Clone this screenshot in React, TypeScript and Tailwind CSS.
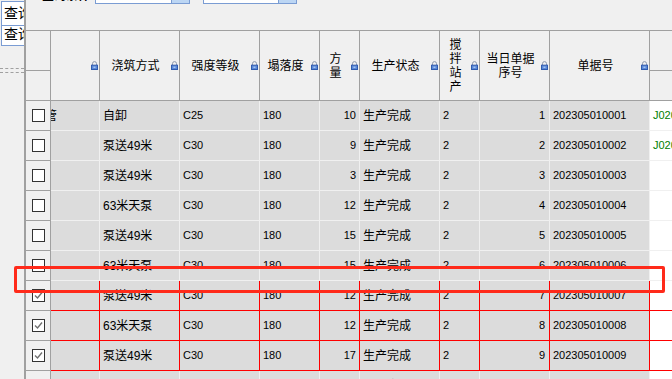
import React from "react";

const COLS =
  "grid grid-cols-[25px_49px_80px_80px_60px_40px_80px_40px_70px_100px_22px]";

function Lock() {
  return (
    <svg width="7" height="9" viewBox="0 0 7 9" className="shrink-0 mr-[1px]">
      <path d="M1.5 4.2V2.6a2 2 0 0 1 4 0v1.6" stroke="#8c98ad" strokeWidth="1" fill="none" />
      <rect x="0.5" y="4.2" width="6" height="4.3" fill="#5b8ad8" stroke="#2f5bb0" strokeWidth="1" />
      <rect x="2.5" y="5.6" width="2" height="1.4" fill="#a9c6f2" />
    </svg>
  );
}

function H({ children }: { children: React.ReactNode }) {
  return (
    <div className="flex items-center border-r border-[#a0a0a0] h-full">
      <div className="flex-1 text-center leading-[14px] text-[12px] text-black">{children}</div>
      <Lock />
    </div>
  );
}

function Check({ checked }: { checked: boolean }) {
  return (
    <div className="w-[13px] h-[13px] border border-[#333] bg-white flex items-center justify-center">
      {checked && (
        <svg width="11" height="11" viewBox="0 0 11 11">
          <polyline points="2,5.5 4.5,8 9,2.5" fill="none" stroke="#707070" strokeWidth="1.4" />
        </svg>
      )}
    </div>
  );
}

type Row = { a: string; g: string; q: string; n: number; c?: boolean; j?: boolean; lead?: string };

const rows: Row[] = [
  { a: "自卸", g: "C25", q: "10", n: 1, j: true, lead: "管" },
  { a: "泵送49米", g: "C30", q: "9", n: 2, j: true },
  { a: "泵送49米", g: "C30", q: "3", n: 3 },
  { a: "63米天泵", g: "C30", q: "12", n: 4 },
  { a: "泵送49米", g: "C30", q: "15", n: 5 },
  { a: "63米天泵", g: "C30", q: "15", n: 6 },
  { a: "泵送49米", g: "C30", q: "12", n: 7, c: true },
  { a: "63米天泵", g: "C30", q: "12", n: 8, c: true },
  { a: "泵送49米", g: "C30", q: "17", n: 9, c: true },
  { a: "63米天泵", g: "C30", q: "11", n: 10 },
];

function DataRow({ r }: { r: Row }) {
  const b = r.c ? "border-[#ff0000]" : "border-[#f0f0f0]";
  const cell = `h-[30px] border-r border-b ${b} bg-[#dcdcdc] flex items-center overflow-hidden whitespace-nowrap`;
  const bill = "2023050100" + String(r.n).padStart(2, "0");
  return (
    <div className={COLS}>
      <div className="h-[30px] border-r border-b border-[#a0a0a0] bg-[#f0f0f0] flex items-center justify-center">
        <Check checked={!!r.c} />
      </div>
      <div className={cell + " text-[12px]"}>
        {r.lead && <span className="ml-[-6px]">{r.lead}</span>}
      </div>
      <div className={cell + " pl-[3px] text-[12px]"}>{r.a}</div>
      <div className={cell + " pl-[3px] text-[11px]"}>{r.g}</div>
      <div className={cell + " pl-[3px] text-[11px]"}>180</div>
      <div className={cell + " justify-end pr-[3px] text-[11px]"}>{r.q}</div>
      <div className={cell + " pl-[3px] text-[12px]"}>生产完成</div>
      <div className={cell + " pl-[3px] text-[11px]"}>2</div>
      <div className={cell + " justify-end pr-[4px] text-[11px]"}>{r.n}</div>
      <div className={cell + " pl-[3px] text-[11px]"}>{bill}</div>
      <div className={`h-[30px] border-b ${b} bg-white flex items-center overflow-hidden whitespace-nowrap pl-[3px] text-[11px] text-[#008000]`}>
        {r.j ? "J020" + bill.slice(3) : ""}
      </div>
    </div>
  );
}

export default function App() {
  return (
    <div className="relative w-[672px] h-[379px] overflow-hidden bg-[#f0f0f0] flex font-['Liberation_Sans','Noto_Sans_CJK_SC',sans-serif] text-black">
      {/* left strip */}
      <div className="w-[24px] shrink-0 flex flex-col pt-[1px]">
        <div className="ml-[1px] h-[25px] border-l border-t border-b border-[#7a9cd3] bg-white overflow-hidden whitespace-nowrap flex items-center pl-[2px] text-[14px]">
          查询
        </div>
        <div className="ml-[1px] h-[20px] border-l border-b border-[#7a9cd3] bg-white overflow-hidden whitespace-nowrap flex items-center pl-[2px] pb-[2px] text-[14px]">
          查询
        </div>
        <div className="mt-[22px] border-t border-dashed border-[#a0a0a0]" />
        <div className="mt-[3px] border-t border-dashed border-[#a0a0a0]" />
      </div>
      <div className="w-[2px] shrink-0 bg-[#a0a0a0]" />
      {/* main */}
      <div className="flex-1 flex flex-col min-w-0">
        <div className="h-[30px] shrink-0 flex items-start overflow-hidden">
          <div className="ml-[16px] w-[53px] mt-[-11px] text-[12px] font-bold whitespace-nowrap leading-[14px]">查询条件:</div>
          <div className="w-[95px] h-[21px] mt-[-17px] border border-[#7a9cd3] bg-white flex justify-end">
            <div className="w-[18px] h-full bg-[#bcd6f4] border-l border-[#7a9cd3]" />
          </div>
          <div className="ml-[13px] w-[94px] h-[21px] mt-[-17px] border border-[#7a9cd3] bg-white flex justify-end">
            <div className="w-[18px] h-full bg-[#bcd6f4] border-l border-[#7a9cd3]" />
          </div>
        </div>
        {/* header */}
        <div className={COLS + " h-[71px] shrink-0 border-t border-b border-[#a0a0a0] bg-[#f0f0f0]"}>
          <div className="flex flex-col border-r border-[#a0a0a0]">
            <div className="h-[40px] border-b border-[#a0a0a0]" />
          </div>
          <H>{""}</H>
          <H>浇筑方式</H>
          <H>强度等级</H>
          <H>塌落度</H>
          <H>
            方<br />量
          </H>
          <H>生产状态</H>
          <H>
            搅<br />拌<br />站<br />产
          </H>
          <H>
            当日单据
            <br />
            序号
          </H>
          <H>单据号</H>
          <div className="flex flex-col">
            <div className="h-[40px] border-b border-[#a0a0a0]" />
          </div>
        </div>
        {rows.map((r) => (
          <DataRow key={r.n} r={r} />
        ))}
      </div>
      {/* annotation */}
      <div className="absolute left-[14px] top-[266px] w-[651px] h-[27px] border-[3px] border-[#ff2a1a] rounded-[2px]" />
    </div>
  );
}
